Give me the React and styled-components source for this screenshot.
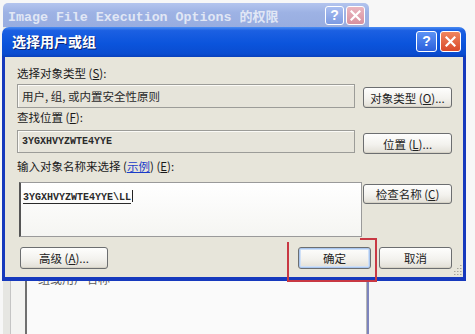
import React from "react";
import styled, { createGlobalStyle, css } from "styled-components";

const GlobalStyle = createGlobalStyle`
  html, body { margin: 0; padding: 0; background: #f7f7f7; }
  body { font-family: "Noto Sans CJK SC", "Noto Sans", sans-serif; }
`;

const CJK = `"Noto Sans CJK SC", "Noto Sans", sans-serif`;
const RED = "#c83843";

const Desktop = styled.div`
  position: relative;
  width: 475px;
  height: 334px;
  overflow: hidden;
  background: #f7f7f7;
`;

/* ---------- window behind ---------- */
const BackWindow = styled.div`
  position: absolute;
  left: 3px;
  top: 3px;
  width: 366px;
  height: 360px;
  display: flex;
  flex-direction: column;
`;

const BackTitleBar = styled.div`
  height: 24px;
  display: flex;
  align-items: center;
  padding: 0 4px 0 5px;
  border-radius: 5px 5px 0 0;
  background: linear-gradient(#b3c4ee, #9db2e4 40%, #98ade0);
`;

const BackTitle = styled.div`
  flex: 1;
  font: bold 13.3px "Liberation Mono", ${CJK};
  color: #e1e7f5;
  white-space: nowrap;
  span { font-family: ${CJK}; font-size: 13px; }
`;

const BackBody = styled.div`
  flex: 1;
  display: flex;
  background: #e6e6e2;
  border-right: 2px solid #7d84bd;
`;

const BackPanel = styled.div`
  margin-left: 7px;
  width: 347px;
  display: flex;
  flex-direction: column;
  padding: 231px 0 0 14px;
  background: #f3f3f1;
  border-left: 1px solid #c4c4c4;
  border-right: 1px solid #b6b6b6;
`;

const UserList = styled.div`
  flex: 1;
  padding: 14px 0 0 11px;
  background: #fafafa;
  border-left: 2px solid #707070;
`;

const ListHeader = styled.div`
  font: 12px/14px ${CJK};
  color: #5a5a5a;
`;

/* ---------- caption buttons ---------- */
const Controls = styled.div`
  display: flex;
  gap: ${(p) => p.$gap}px;
`;

const CapButton = styled.div`
  box-sizing: border-box;
  width: ${(p) => p.$size}px;
  height: ${(p) => p.$size}px;
  border-radius: 3px;
  border: 1px solid #fff;
  display: flex;
  align-items: center;
  justify-content: center;
  font: bold 14px "Liberation Sans", sans-serif;
  color: #fff;
  ${(p) =>
    p.$kind === "help"
      ? css`
          background: ${p.$dim
            ? "linear-gradient(#a8bdf0, #7d9be2)"
            : "linear-gradient(#5c93f5, #2b5fdc)"};
        `
      : css`
          background: ${p.$dim
            ? "linear-gradient(#eab6c0, #d7919f)"
            : "linear-gradient(#f0865e, #d9492a)"};
        `}
`;

const CloseGlyph = () => (
  <svg width="11" height="11" viewBox="0 0 11 11">
    <path d="M1.5 1.5 L9.5 9.5 M9.5 1.5 L1.5 9.5" stroke="#fff" strokeWidth="2.2" strokeLinecap="square" />
  </svg>
);

/* ---------- front dialog ---------- */
const Dialog = styled.div`
  position: absolute;
  left: 2px;
  top: 27px;
  width: 464px;
  display: flex;
  flex-direction: column;
`;

const TitleBar = styled.div`
  height: 30px;
  box-sizing: border-box;
  display: flex;
  align-items: center;
  padding: 0 5px 2px 10px;
  border-radius: 7px 7px 0 0;
  background: linear-gradient(#4a8cf2 0%, #1c60e2 12%, #0b54dc 55%, #0a4cd0 90%, #0940bb 100%);
`;

const Title = styled.div`
  flex: 1;
  font: bold 14px ${CJK};
  color: #fff;
  text-shadow: 1px 1px 0 #0b2470;
`;

const Body = styled.div`
  position: relative;
  box-sizing: border-box;
  height: 224px;
  display: flex;
  flex-direction: column;
  padding: 9px 11px 0 12px;
  background: #e7e5da;
  border: 3px solid #1639bd;
  border-top: none;
  border-bottom-width: 4px;
`;

const Label = styled.div`
  height: 14px;
  font: 11.5px/14px ${CJK};
  color: #1a1a1a;
  margin: ${(p) => p.$m};
  white-space: nowrap;
  a { color: #1a3cc8; text-decoration: underline; }
`;

const Row = styled.div`
  display: flex;
  align-items: flex-start;
  gap: ${(p) => p.$gap ?? 8}px;
  margin-top: ${(p) => p.$mt ?? 0}px;
`;

const ReadField = styled.div`
  box-sizing: border-box;
  width: 338px;
  height: ${(p) => p.$h}px;
  display: flex;
  align-items: center;
  padding-left: 4px;
  background: #e6e4da;
  border: 1px solid #9c9c98;
  box-shadow: inset 1px 1px 0 #fbfaf6;
  font: 11.5px ${CJK};
  color: #2a2a2a;
`;

const HostText = styled.span`
  font: bold 10px/12px "Liberation Mono", monospace;
  color: #2a2a2a;
  ${(p) => p.$link && css`border-bottom: 1px solid #2a2a2a;`}
`;

const Caret = styled.span`
  display: inline-block;
  width: 1px;
  height: 12px;
  margin-left: 1px;
  background: #222;
  vertical-align: -2px;
`;

const NameBox = styled.div`
  box-sizing: border-box;
  width: 343px;
  height: 55px;
  margin-left: 2px;
  padding: 7px 0 0 2px;
  font: 10px/12px "Liberation Mono", monospace;
  background: linear-gradient(#ffffff, #f5f5f2);
  border: 1px solid #9a9a9a;
  border-left: 2px solid #555;
`;

const Button = styled.button`
  box-sizing: border-box;
  width: ${(p) => p.$w ?? 89}px;
  height: ${(p) => p.$h ?? 21}px;
  margin: ${(p) => p.$m ?? 0};
  padding: 0;
  display: flex;
  align-items: center;
  justify-content: center;
  border: 1px solid #6c6e70;
  border-radius: 3px;
  background: linear-gradient(#fefefd, #f3f2ee 55%, #e2dfd6);
  box-shadow: ${(p) =>
    p.$default
      ? "inset 0 0 0 1px #a9c6ef, inset 0 0 0 2px #cfe0f7"
      : "inset 0 -1px 0 #d6d2c6"};
  font: 11.5px ${CJK};
  color: #222;
  white-space: nowrap;
`;

const Gap = styled.div`
  flex: 1;
`;

const Grip = styled.svg`
  position: absolute;
  right: 1px;
  bottom: 2px;
`;

const Highlight = styled.div`
  position: absolute;
  left: 287px;
  top: 238px;
  width: 90px;
  height: 44px;
  box-sizing: border-box;
  border-right: 2px solid ${RED};
  border-bottom: 2px solid ${RED};
  &::before {
    content: "";
    position: absolute;
    left: 0;
    top: 4px;
    bottom: 0;
    width: 2px;
    background: ${RED};
  }
  &::after {
    content: "";
    position: absolute;
    right: 0;
    top: 0;
    width: 15px;
    height: 2px;
    background: ${RED};
  }
`;

export default function App() {
  return (
    <>
      <GlobalStyle />
      <Desktop>
        <BackWindow>
          <BackTitleBar>
            <BackTitle>
              Image File Execution Options <span>的权限</span>
            </BackTitle>
            <Controls $gap={2}>
              <CapButton $kind="help" $dim $size={19}>?</CapButton>
              <CapButton $kind="close" $dim $size={19}><CloseGlyph /></CapButton>
            </Controls>
          </BackTitleBar>
          <BackBody>
            <BackPanel>
              <UserList>
                <ListHeader>组或用户名称</ListHeader>
              </UserList>
            </BackPanel>
          </BackBody>
        </BackWindow>

        <Dialog>
          <TitleBar>
            <Title>选择用户或组</Title>
            <Controls $gap={3}>
              <CapButton $kind="help" $size={21}>?</CapButton>
              <CapButton $kind="close" $size={21}><CloseGlyph /></CapButton>
            </Controls>
          </TitleBar>
          <Body>
            <Label $m="0 0 4px">选择对象类型 (<u>S</u>):</Label>
            <Row>
              <ReadField $h={24}>用户, 组, 或内置安全性原则</ReadField>
              <Button $m="3px 0 0">对象类型 (<u>O</u>)...</Button>
            </Row>

            <Label $m="2px 0 6px">查找位置 (<u>F</u>):</Label>
            <Row>
              <ReadField $h={23}><HostText>3YGXHVYZWTE4YYE</HostText></ReadField>
              <Button $m="3px 0 0">位置 (<u>L</u>)...</Button>
            </Row>

            <Label $m="5px 0 9px">
              输入对象名称来选择 (<a>示例</a>) (<u>E</u>):
            </Label>
            <Row $gap={1}>
              <NameBox>
                <HostText $link>3YGXHVYZWTE4YYE\LL</HostText>
                <Caret />
              </NameBox>
              <Button $h={20} $m="2px 0 0">检查名称 (<u>C</u>)</Button>
            </Row>

            <Row $gap={8} $mt={10}>
              <Button $w={88} $h={22} $m="0 0 0 3px">高级 (<u>A</u>)...</Button>
              <Gap />
              <Button $w={73} $h={22} $default>确定</Button>
              <Button $w={73} $h={22}>取消</Button>
            </Row>

            <Grip width="8" height="10" viewBox="0 0 8 10">
              {[
                [6, 0], [6, 3], [3, 3], [6, 6], [3, 6], [0, 6], [6, 9], [3, 9], [0, 9],
              ].map(([x, y]) => (
                <rect key={`${x}-${y}`} x={x} y={y} width="1.5" height="1" fill="#a7a59c" />
              ))}
            </Grip>
          </Body>
        </Dialog>

        <Highlight />
      </Desktop>
    </>
  );
}
